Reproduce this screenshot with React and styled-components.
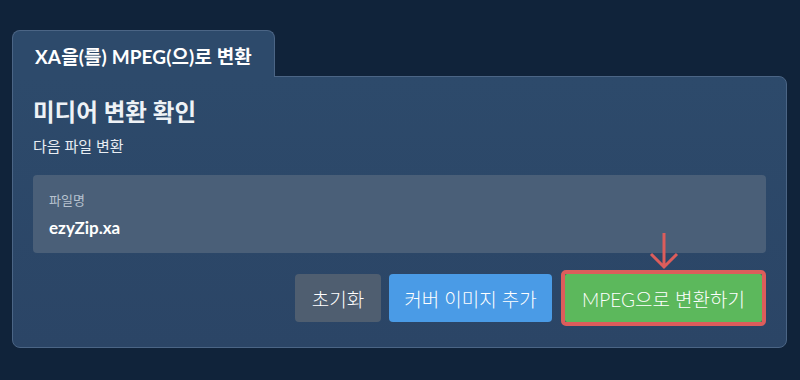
import React from 'react'
import styled, { createGlobalStyle } from 'styled-components'

const GlobalStyle = createGlobalStyle`
  html, body {
    margin: 0;
    padding: 0;
    background: #10233a;
  }
  body {
    font-family: Lato, "Noto Sans CJK KR", sans-serif;
    color: #ffffff;
  }
`

const Page = styled.div`
  width: 800px;
  height: 380px;
  box-sizing: border-box;
  padding: 30px 13px 0 12px;
`

const Tab = styled.div`
  position: relative;
  z-index: 1;
  display: inline-block;
  box-sizing: border-box;
  height: 47px;
  width: 263px;
  margin-bottom: -1px;
  padding: 11px 0 0 22px;
  background: #2d4a6b;
  border: 1px solid #4b6585;
  border-bottom: none;
  border-radius: 8px 8px 0 0;
  font-size: 19px;
  font-weight: 700;
  letter-spacing: 0.1px;
  white-space: nowrap;
`

const Panel = styled.div`
  box-sizing: border-box;
  height: 272px;
  padding: 19px 20px 20px 20px;
  background: linear-gradient(180deg, #2d4a6b 0%, #2b4566 100%);
  border: 1px solid #4b6585;
  border-radius: 0 8px 8px 8px;
`

const Title = styled.h2`
  margin: 0;
  font-size: 23.5px;
  font-weight: 600;
  line-height: 32px;
  color: #eef2f6;
`

const Subtitle = styled.p`
  margin: 8px 0 0 0;
  font-size: 15px;
  line-height: 20px;
  color: #e8edf3;
`

const Field = styled.div`
  margin-top: 19px;
  height: 78px;
  box-sizing: border-box;
  padding: 17px 16px 0 16px;
  background: #4a5f78;
  border-radius: 4px;
`

const FieldLabel = styled.div`
  font-size: 13px;
  line-height: 16px;
  color: #b7c2cf;
`

const FieldValue = styled.div`
  margin-top: 10px;
  font-size: 17px;
  font-weight: 700;
  line-height: 20px;
  color: #ffffff;
`

const Actions = styled.div`
  display: flex;
  justify-content: flex-end;
  align-items: center;
  gap: 8px;
  margin-top: 17px;
`

const Button = styled.button`
  height: 48px;
  width: ${p => p.$w}px;
  padding: 0;
  border: none;
  border-radius: ${p => p.$r || 4}px;
  background: ${p => p.$bg};
  color: #ffffff;
  font-family: Lato, "Noto Sans CJK KR", sans-serif;
  font-size: 19px;
  font-weight: 300;
  white-space: nowrap;
  cursor: pointer;
`

const Highlight = styled.div`
  position: relative;
  margin-left: 1px;
  border: 4px solid #dc5d5b;
  border-radius: 5px;
  display: flex;
`

const Arrow = styled.svg`
  position: absolute;
  left: 50%;
  top: -42px;
  margin-left: -15px;
`

export default function App() {
  return (
    <>
      <GlobalStyle />
      <Page>
        <Tab>XA을(를) MPEG(으)로 변환</Tab>
        <Panel>
          <Title>미디어 변환 확인</Title>
          <Subtitle>다음 파일 변환</Subtitle>
          <Field>
            <FieldLabel>파일명</FieldLabel>
            <FieldValue>ezyZip.xa</FieldValue>
          </Field>
          <Actions>
            <Button $bg="#4f5e70" $w={86}>초기화</Button>
            <Button $bg="#4a9be6" $w={163}>커버 이미지 추가</Button>
            <Highlight>
              <Arrow width="30" height="38" viewBox="0 0 30 38">
                <path d="M15 1 V35 M2 22 L15 35 L28 22" fill="none" stroke="#dc5d5b" strokeWidth="3" />
              </Arrow>
              <Button $bg="#5cb85c" $w={197} $r={2}>MPEG으로 변환하기</Button>
            </Highlight>
          </Actions>
        </Panel>
      </Page>
    </>
  )
}
